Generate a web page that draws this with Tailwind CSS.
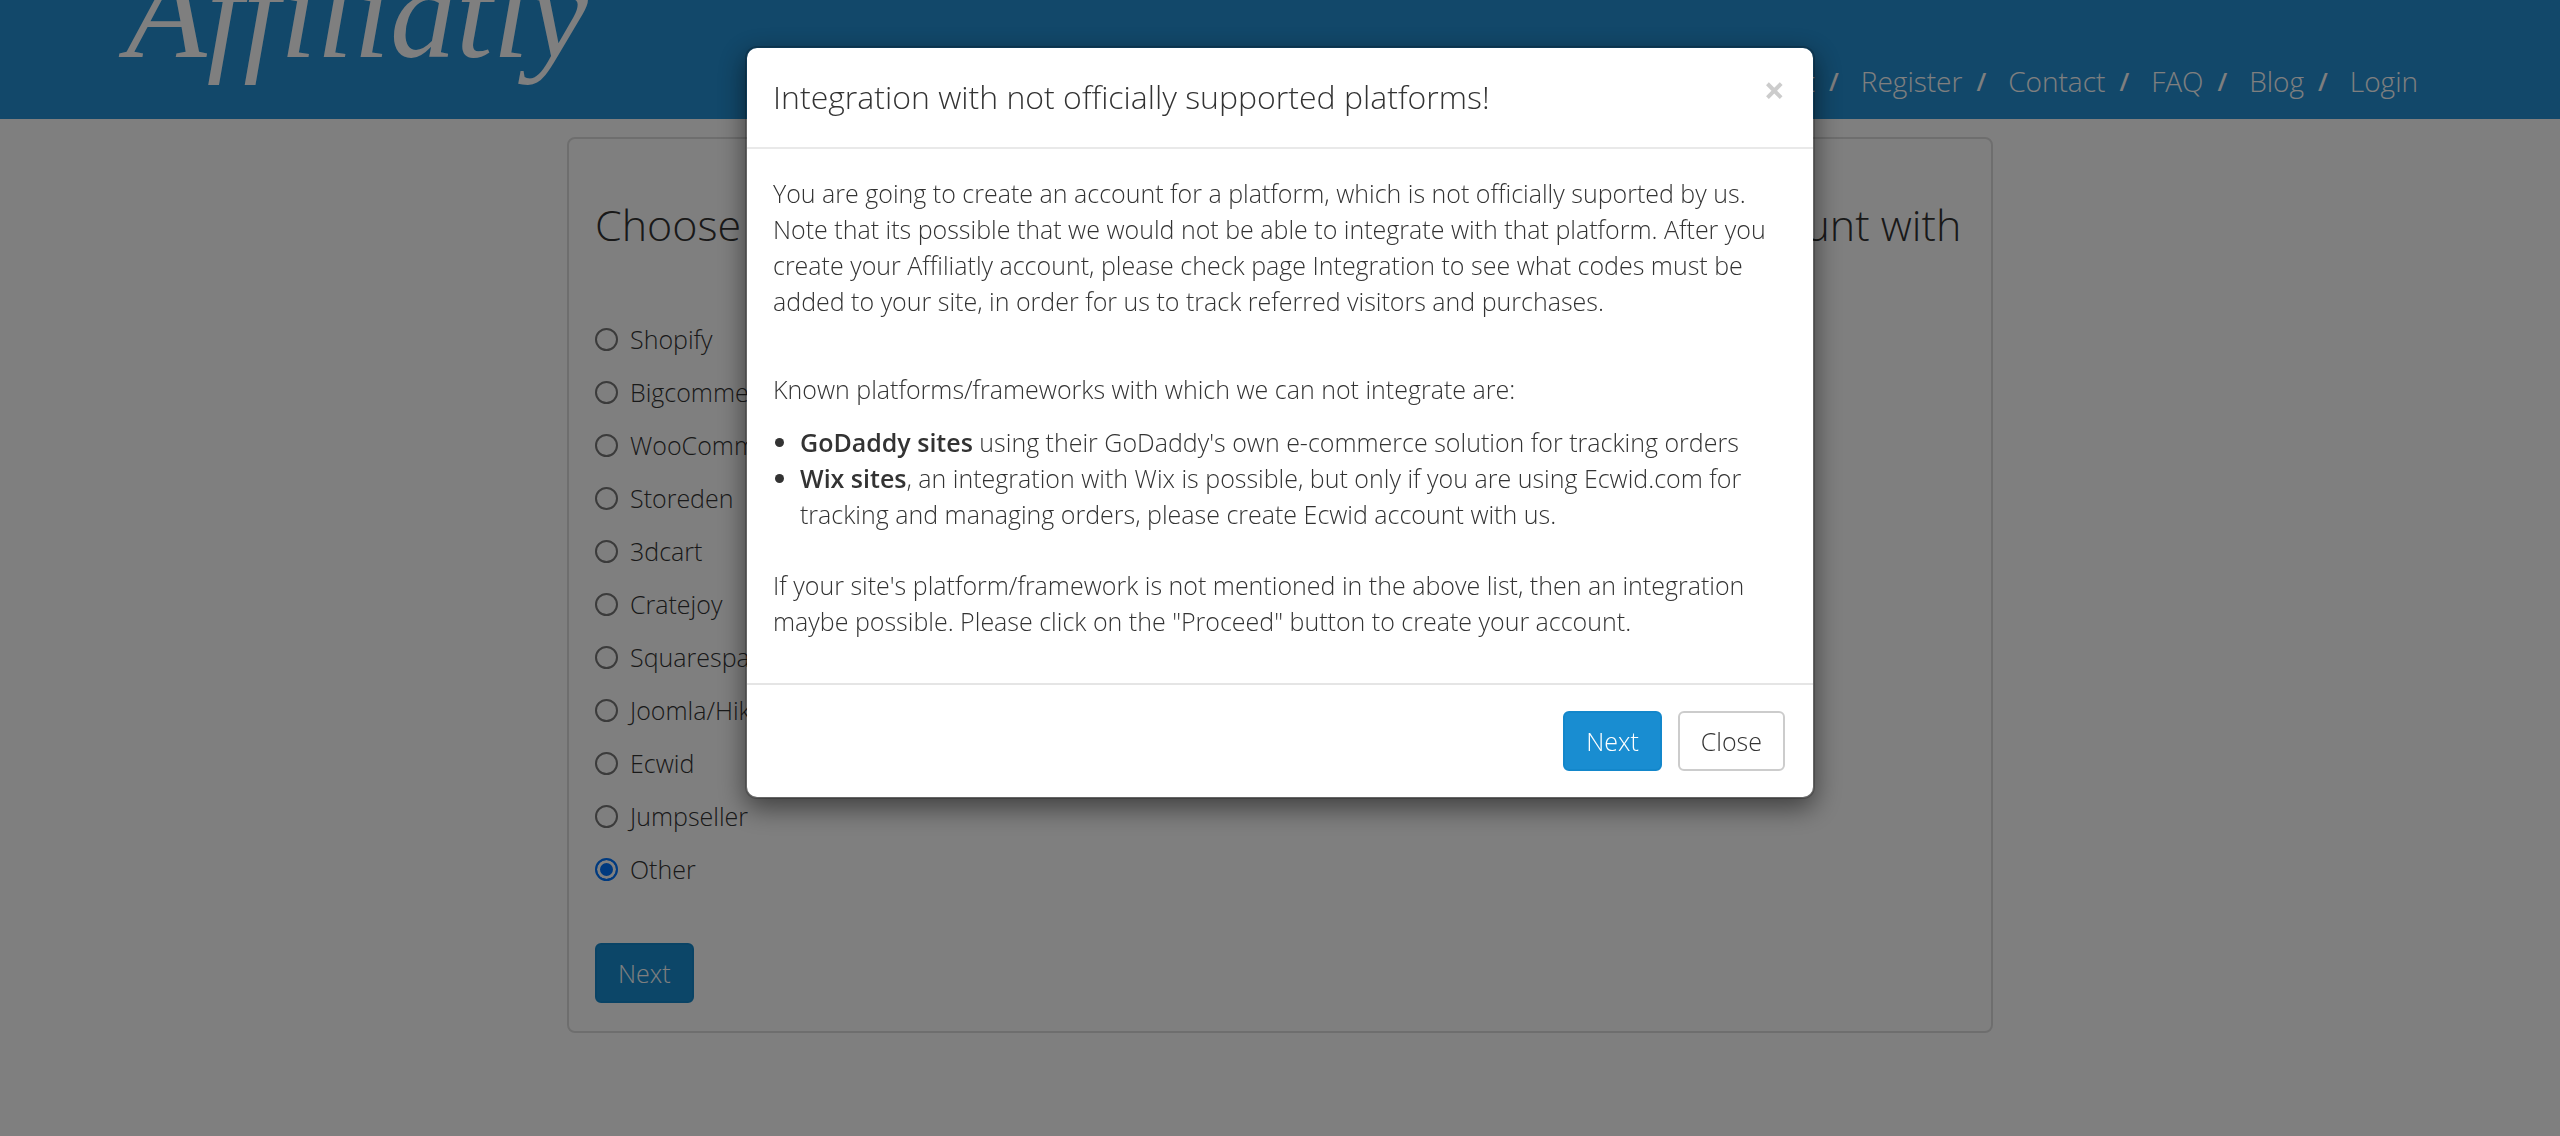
<!DOCTYPE html>
<html lang="en">
<head>
    <meta charset="UTF-8">
    <meta name="viewport" content="width=device-width, initial-scale=1.0">
    <title>Affiliatly - Register</title>
    <script src="https://cdn.jsdelivr.net/npm/@tailwindcss/browser@4"></script>
</head>
<body class="min-h-screen overflow-hidden bg-white font-['Open_Sans',sans-serif] text-[25px] leading-[36px] font-light text-[#333]">
    <!-- Header -->
    <header class="flex h-[119px] items-end justify-between overflow-hidden bg-[#2490d4] pr-[142px] pl-[126px] text-white">
        <a href="#" class="mb-[40px] font-['Liberation_Serif',serif] text-[132px] leading-[132px] font-normal italic">Affiliatly</a>
        <nav class="mb-[18px] flex items-center gap-[14px] text-[28px] leading-[40px]">
            <a href="#">Support</a>
            <span class="flex gap-[22px]"><b class="text-[25px] font-semibold">/</b><a href="#">Register</a></span>
            <span class="flex gap-[22px]"><b class="text-[25px] font-semibold">/</b><a href="#">Contact</a></span>
            <span class="flex gap-[22px]"><b class="text-[25px] font-semibold">/</b><a href="#">FAQ</a></span>
            <span class="flex gap-[22px]"><b class="text-[25px] font-semibold">/</b><a href="#">Blog</a></span>
            <span class="flex gap-[22px]"><b class="text-[25px] font-semibold">/</b><a href="#">Login</a></span>
        </nav>
    </header>

    <!-- Platform form -->
    <main class="mx-auto mt-[18px] max-w-[1426px] rounded-lg border-2 border-[#ddd] px-[26px] pt-[60px] pb-[28px]">
        <h1 class="text-[43px] leading-[52px] whitespace-nowrap">Choose platform, which you want to integrate the Affiliatly account with</h1>
        <form id="platformForm" class="mt-[70px]">
            <div class="flex flex-col gap-[17px]">
                <label class="flex items-center gap-[12px]">
                    <input type="radio" name="platform" value="shopify" class="size-[23px] appearance-none rounded-full border-2 border-[#767676] checked:border-[#0075ff] checked:bg-[#0075ff] checked:shadow-[inset_0_0_0_3px_#fff]">
                    Shopify
                </label>
                <label class="flex items-center gap-[12px]">
                    <input type="radio" name="platform" value="bigcommerce" class="size-[23px] appearance-none rounded-full border-2 border-[#767676] checked:border-[#0075ff] checked:bg-[#0075ff] checked:shadow-[inset_0_0_0_3px_#fff]">
                    Bigcommerce
                </label>
                <label class="flex items-center gap-[12px]">
                    <input type="radio" name="platform" value="woocommerce" class="size-[23px] appearance-none rounded-full border-2 border-[#767676] checked:border-[#0075ff] checked:bg-[#0075ff] checked:shadow-[inset_0_0_0_3px_#fff]">
                    WooCommerce
                </label>
                <label class="flex items-center gap-[12px]">
                    <input type="radio" name="platform" value="storeden" class="size-[23px] appearance-none rounded-full border-2 border-[#767676] checked:border-[#0075ff] checked:bg-[#0075ff] checked:shadow-[inset_0_0_0_3px_#fff]">
                    Storeden
                </label>
                <label class="flex items-center gap-[12px]">
                    <input type="radio" name="platform" value="3dcart" class="size-[23px] appearance-none rounded-full border-2 border-[#767676] checked:border-[#0075ff] checked:bg-[#0075ff] checked:shadow-[inset_0_0_0_3px_#fff]">
                    3dcart
                </label>
                <label class="flex items-center gap-[12px]">
                    <input type="radio" name="platform" value="cratejoy" class="size-[23px] appearance-none rounded-full border-2 border-[#767676] checked:border-[#0075ff] checked:bg-[#0075ff] checked:shadow-[inset_0_0_0_3px_#fff]">
                    Cratejoy
                </label>
                <label class="flex items-center gap-[12px]">
                    <input type="radio" name="platform" value="squarespace" class="size-[23px] appearance-none rounded-full border-2 border-[#767676] checked:border-[#0075ff] checked:bg-[#0075ff] checked:shadow-[inset_0_0_0_3px_#fff]">
                    Squarespace
                </label>
                <label class="flex items-center gap-[12px]">
                    <input type="radio" name="platform" value="joomla" class="size-[23px] appearance-none rounded-full border-2 border-[#767676] checked:border-[#0075ff] checked:bg-[#0075ff] checked:shadow-[inset_0_0_0_3px_#fff]">
                    Joomla/HikaShop
                </label>
                <label class="flex items-center gap-[12px]">
                    <input type="radio" name="platform" value="ecwid" class="size-[23px] appearance-none rounded-full border-2 border-[#767676] checked:border-[#0075ff] checked:bg-[#0075ff] checked:shadow-[inset_0_0_0_3px_#fff]">
                    Ecwid
                </label>
                <label class="flex items-center gap-[12px]">
                    <input type="radio" name="platform" value="jumpseller" class="size-[23px] appearance-none rounded-full border-2 border-[#767676] checked:border-[#0075ff] checked:bg-[#0075ff] checked:shadow-[inset_0_0_0_3px_#fff]">
                    Jumpseller
                </label>
                <label class="flex items-center gap-[12px]">
                    <input type="radio" name="platform" value="other" checked class="size-[23px] appearance-none rounded-full border-2 border-[#767676] checked:border-[#0075ff] checked:bg-[#0075ff] checked:shadow-[inset_0_0_0_3px_#fff]">
                    Other
                </label>
            </div>
            <button type="submit" class="mt-[56px] block rounded-md border-2 border-[#1387cb] bg-[#198dd1] px-[21px] py-[10px] text-white">Next</button>
        </form>
    </main>

    <!-- Modal -->
    <div id="modal" class="fixed inset-0 bg-black/50 pt-[46px]">
        <div role="dialog" aria-labelledby="modalTitle" class="mx-auto max-w-[1070px] rounded-xl border-2 border-black/20 bg-white bg-clip-padding shadow-[0_9px_27px_rgba(0,0,0,0.5)]">
            <div class="flex items-start justify-between border-b-2 border-[#e9e9e9] pr-[28px] pl-[26px] pt-[26px] pb-[27px]">
                <h4 id="modalTitle" class="text-[32px] leading-[46px]">Integration with not officially supported platforms!</h4>
                <button type="button" aria-label="Close dialog" class="close-modal text-[37px] leading-[32px] font-bold text-[#ccc]">×</button>
            </div>
            <div class="px-[26px] pt-[26px] pb-[44px]">
                <p>You are going to create an account for a platform, which is not officially suported by us. Note that its possible that we would not be able to integrate with that platform. After you create your Affiliatly account, please check page Integration to see what codes must be added to your site, in order for us to track referred visitors and purchases.</p>
                <p class="mt-[52px]">Known platforms/frameworks with which we can not integrate are:</p>
                <ul class="mt-[17px] list-disc pl-[27px]">
                    <li><b class="font-semibold">GoDaddy sites</b> using their GoDaddy's own e-commerce solution for tracking orders</li>
                    <li><b class="font-semibold">Wix sites</b>, an integration with Wix is possible, but only if you are using Ecwid.com for tracking and managing orders, please create Ecwid account with us.</li>
                </ul>
                <p class="mt-[35px]">If your site's platform/framework is not mentioned in the above list, then an integration maybe possible. Please click on the "Proceed" button to create your account.</p>
            </div>
            <div class="flex justify-end gap-[16px] border-t-2 border-[#e5e5e5] py-[26px] pr-[28px] pl-[26px]">
                <button type="button" class="rounded-md border-2 border-[#1387cb] bg-[#198dd1] px-[21px] py-[10px] text-white">Next</button>
                <button type="button" class="close-modal rounded-md border-2 border-[#ccc] bg-white px-[21px] py-[10px]">Close</button>
            </div>
        </div>
    </div>

    <script>
        // Hide the modal from the cross or the Close button
        document.querySelectorAll('.close-modal').forEach(btn => {
            btn.addEventListener('click', () => {
                document.getElementById('modal').classList.add('hidden');
            });
        });
    </script>
</body>
</html>
